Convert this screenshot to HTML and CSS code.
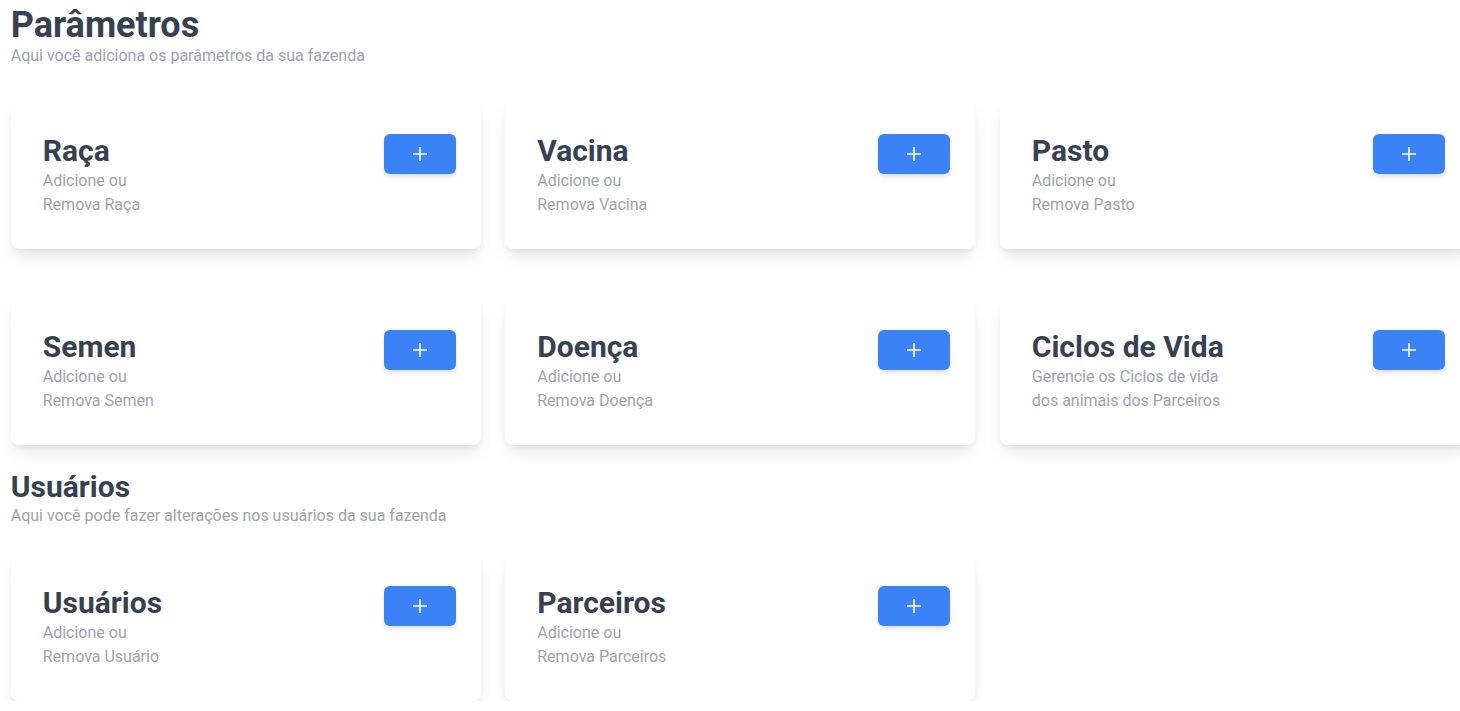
FILE: index.html
```
<!DOCTYPE html>
<html lang="pt-BR">
<head>
<meta charset="utf-8">
<title>Parâmetros</title>
<link rel="stylesheet" href="styles.css">
</head>
<body>
<main class="page">
  <section class="section">
    <h1 class="title-lg">Parâmetros</h1>
    <p class="subtitle">Aqui você adiciona os parâmetros da sua fazenda</p>
    <div class="grid grid-params">
      <div class="card">
        <div class="card-text"><h2 class="card-title">Raça</h2><p class="card-desc">Adicione ou<br>Remova Raça</p></div>
        <button class="add-btn" type="button"><svg viewBox="0 0 16 16" width="16" height="16"><path d="M8 1v14M1 8h14" stroke="#fff" stroke-width="1.6" fill="none"/></svg></button>
      </div>
      <div class="card">
        <div class="card-text"><h2 class="card-title">Vacina</h2><p class="card-desc">Adicione ou<br>Remova Vacina</p></div>
        <button class="add-btn" type="button"><svg viewBox="0 0 16 16" width="16" height="16"><path d="M8 1v14M1 8h14" stroke="#fff" stroke-width="1.6" fill="none"/></svg></button>
      </div>
      <div class="card">
        <div class="card-text"><h2 class="card-title">Pasto</h2><p class="card-desc">Adicione ou<br>Remova Pasto</p></div>
        <button class="add-btn" type="button"><svg viewBox="0 0 16 16" width="16" height="16"><path d="M8 1v14M1 8h14" stroke="#fff" stroke-width="1.6" fill="none"/></svg></button>
      </div>
      <div class="card">
        <div class="card-text"><h2 class="card-title">Semen</h2><p class="card-desc">Adicione ou<br>Remova Semen</p></div>
        <button class="add-btn" type="button"><svg viewBox="0 0 16 16" width="16" height="16"><path d="M8 1v14M1 8h14" stroke="#fff" stroke-width="1.6" fill="none"/></svg></button>
      </div>
      <div class="card">
        <div class="card-text"><h2 class="card-title">Doença</h2><p class="card-desc">Adicione ou<br>Remova Doença</p></div>
        <button class="add-btn" type="button"><svg viewBox="0 0 16 16" width="16" height="16"><path d="M8 1v14M1 8h14" stroke="#fff" stroke-width="1.6" fill="none"/></svg></button>
      </div>
      <div class="card">
        <div class="card-text"><h2 class="card-title">Ciclos de Vida</h2><p class="card-desc">Gerencie os Ciclos de vida<br>dos animais dos Parceiros</p></div>
        <button class="add-btn" type="button"><svg viewBox="0 0 16 16" width="16" height="16"><path d="M8 1v14M1 8h14" stroke="#fff" stroke-width="1.6" fill="none"/></svg></button>
      </div>
    </div>
  </section>
  <section class="section">
    <h1 class="title-md">Usuários</h1>
    <p class="subtitle">Aqui você pode fazer alterações nos usuários da sua fazenda</p>
    <div class="grid grid-users">
      <div class="card">
        <div class="card-text"><h2 class="card-title">Usuários</h2><p class="card-desc">Adicione ou<br>Remova Usuário</p></div>
        <button class="add-btn" type="button"><svg viewBox="0 0 16 16" width="16" height="16"><path d="M8 1v14M1 8h14" stroke="#fff" stroke-width="1.6" fill="none"/></svg></button>
      </div>
      <div class="card">
        <div class="card-text"><h2 class="card-title">Parceiros</h2><p class="card-desc">Adicione ou<br>Remova Parceiros</p></div>
        <button class="add-btn" type="button"><svg viewBox="0 0 16 16" width="16" height="16"><path d="M8 1v14M1 8h14" stroke="#fff" stroke-width="1.6" fill="none"/></svg></button>
      </div>
    </div>
  </section>
</main>
</body>
</html>
```
FILE: styles.css
```
* { box-sizing: border-box; }
html, body { margin: 0; padding: 0; }
body {
  background: #ffffff;
  font-family: Roboto, "Liberation Sans", sans-serif;
  color: #374151;
  overflow: hidden;
}
.page {
  padding: 5px 0 0 10.75px;
  width: 1480px;
}
.title-lg {
  margin: 0;
  font-size: 36px;
  line-height: 40px;
  font-weight: 700;
  color: #374151;
}
.title-md {
  margin: 24px 0 0;
  font-size: 30px;
  line-height: 36px;
  font-weight: 700;
  color: #374151;
}
.subtitle {
  margin: 1px 0 0;
  font-size: 16px;
  line-height: 20px;
  color: #9ca3af;
}
.grid {
  display: grid;
  grid-template-columns: repeat(3, 470px);
  column-gap: 24.5px;
  row-gap: 47px;
}
.grid-params { margin-top: 34px; }
.grid-users { margin-top: 26px; }
.card {
  background: #ffffff;
  border-radius: 8px;
  padding: 34px 25px 31px 32px;
  display: flex;
  justify-content: space-between;
  align-items: flex-start;
  box-shadow: 0 10px 15px -3px rgba(0,0,0,0.1), 0 4px 6px -2px rgba(0,0,0,0.05);
  height: 149px;
}
.card-text { margin-top: -1px; }
.card-title {
  margin: 0;
  font-size: 30px;
  line-height: 36px;
  font-weight: 700;
  color: #374151;
}
.card-desc {
  margin: 0;
  font-size: 16px;
  line-height: 24px;
  color: #9ca3af;
}
.add-btn {
  width: 72px;
  height: 40px;
  border: none;
  border-radius: 6px;
  background: #3b82f6;
  display: flex;
  align-items: center;
  justify-content: center;
  box-shadow: 0 4px 6px -1px rgba(0,0,0,0.1), 0 2px 4px -1px rgba(0,0,0,0.06);
  padding: 0;
  cursor: pointer;
}
.add-btn svg { display: block; }
```
